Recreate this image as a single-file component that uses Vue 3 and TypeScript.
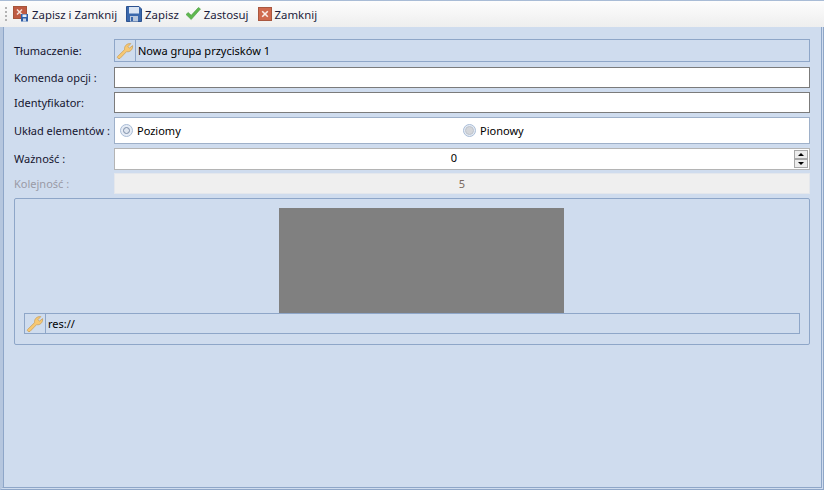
<script setup lang="ts">
const tools = [
  { label: 'Zapisz i Zamknij', icon: 'saveclose' },
  { label: 'Zapisz', icon: 'save' },
  { label: 'Zastosuj', icon: 'apply' },
  { label: 'Zamknij', icon: 'close' },
]
</script>

<template>
  <div class="window">
    <div class="toolbar">
      <div class="grip"><i v-for="n in 4" :key="n"></i></div>
      <div v-for="t in tools" :key="t.label" class="tool" :class="'tool-' + t.icon">
        <svg v-if="t.icon === 'saveclose'" width="16" height="16" viewBox="0 0 16 16">
          <rect x="0.5" y="0.5" width="13" height="12" fill="#bf5a42" stroke="#a5543a" />
          <path d="M4 3.5l5 5M9 3.5l-5 5" stroke="#f6e3dc" stroke-width="1.5" />
          <rect x="8" y="8" width="7" height="7.5" fill="#2f5fa8" />
          <rect x="9.5" y="8.5" width="4" height="2.5" fill="#e8eef8" />
          <rect x="10" y="12.5" width="3" height="3" fill="#c5d2e6" />
        </svg>
        <svg v-else-if="t.icon === 'save'" width="16" height="16" viewBox="0 0 16 16">
          <path d="M0.5 0.5h12.5l2.5 2.5v12.5h-15z" fill="#3a68ac" stroke="#2c5290" />
          <rect x="3" y="1" width="10" height="6.5" fill="#dbe5f3" />
          <rect x="4" y="10" width="8" height="5.5" fill="#b9c7dc" />
          <rect x="5" y="11" width="2" height="4" fill="#3a68ac" />
        </svg>
        <svg v-else-if="t.icon === 'apply'" width="16" height="16" viewBox="0 0 16 16">
          <path d="M1 8.5l2.2-2 3 2.8L13.4 1.5 15.5 3 6.2 13.5z" fill="#5fb84f" stroke="#4a9c3f" stroke-width="0.6" />
        </svg>
        <svg v-else width="16" height="16" viewBox="0 0 16 16">
          <rect x="1.5" y="1.5" width="13" height="13" fill="#d06a4e" stroke="#a9573f" />
          <path d="M5.2 5.2l5.6 5.6M10.8 5.2l-5.6 5.6" stroke="#fbeee9" stroke-width="1.6" />
        </svg>
        <span>{{ t.label }}</span>
      </div>
    </div>

    <div class="body">
      <div class="row row-translate">
        <label>Tłumaczenie:</label>
        <div class="lookup">
          <div class="wrench">
            <svg width="18" height="18" viewBox="0 0 18 18">
              <path d="M1.5 14.6L8.6 7.6C8 4.6 10.4 1.2 14.8 1.6L12 4.6 13.4 6.2 16.6 3.6C17 8 13.6 10.4 10.6 9.6L4 16.4C2.6 17.2 0.8 15.8 1.5 14.6Z" fill="#f7c873" stroke="#c9a15e" stroke-width="0.8" />
            </svg>
          </div>
          <span>Nowa grupa przycisków 1</span>
        </div>
      </div>

      <div class="row row-text">
        <label>Komenda opcji :</label>
        <div class="input dark"></div>
      </div>

      <div class="row row-text">
        <label>Identyfikator:</label>
        <div class="input dark"></div>
      </div>

      <div class="row row-radio">
        <label>Układ elementów :</label>
        <div class="input radios">
          <div class="radio-cell">
            <span class="radio on"><i></i></span>
            <span>Poziomy</span>
          </div>
          <div class="radio-cell">
            <span class="radio"><i></i></span>
            <span>Pionowy</span>
          </div>
        </div>
      </div>

      <div class="row row-spin">
        <label>Ważność :</label>
        <div class="input spin">
          <span class="value">0</span>
          <div class="spin-buttons">
            <div class="spin-btn"><b class="up"></b></div>
            <div class="spin-btn"><b class="down"></b></div>
          </div>
        </div>
      </div>

      <div class="row row-off">
        <label class="muted">Kolejność :</label>
        <div class="input off">
          <span class="value">5</span>
        </div>
      </div>

      <div class="group">
        <div class="picture"></div>
        <div class="lookup small">
          <div class="wrench">
            <svg width="18" height="18" viewBox="0 0 18 18">
              <path d="M1.5 14.6L8.6 7.6C8 4.6 10.4 1.2 14.8 1.6L12 4.6 13.4 6.2 16.6 3.6C17 8 13.6 10.4 10.6 9.6L4 16.4C2.6 17.2 0.8 15.8 1.5 14.6Z" fill="#f7c873" stroke="#c9a15e" stroke-width="0.8" />
            </svg>
          </div>
          <span>res://</span>
        </div>
      </div>
    </div>
  </div>
</template>

<style>
html, body { margin: 0; padding: 0; }
</style>

<style scoped>
.window {
  width: 824px;
  height: 490px;
  display: flex;
  flex-direction: column;
  box-sizing: border-box;
  font-family: "Noto Sans", "Open Sans", sans-serif;
  font-size: 11px;
  color: #15152e;
  background: #cfdcee;
  overflow: hidden;
}
.toolbar {
  height: 27px;
  flex: none;
  display: flex;
  align-items: center;
  box-sizing: border-box;
  padding-left: 5px;
  background: linear-gradient(#fdfdfd, #eeeeee);
  border-top: 1px solid #a9bcd6;
}
.grip {
  width: 3px;
  display: flex;
  flex-direction: column;
  gap: 2px;
  margin-right: 5px;
}
.grip i { display: block; width: 2px; height: 2px; background: #b3b3b3; }
.tool {
  display: flex;
  align-items: center;
  gap: 3px;
  font-size: 11.4px;
  color: #1c1c3c;
}
.tool-saveclose { margin-right: 9px; }
.tool-save { margin-right: 6px; }
.tool-apply { margin-right: 8px; }
.tool-close { gap: 2px; }
.body {
  flex: 1;
  box-sizing: border-box;
  padding: 12px 11px 0 11px;
  border-left: 3px solid #b5c6de;
  border-right: 3px double #8ea6c8;
  border-bottom: 3px double #8ea6c8;
  box-shadow: inset 1px 0 0 #8ea6c8;
  display: flex;
  flex-direction: column;
}
.row { display: flex; align-items: center; }
.row label { width: 100px; flex: none; }
.row-translate { height: 23px; margin-bottom: 5px; }
.row-text { height: 21px; margin-bottom: 4px; }
.row-radio { height: 27px; margin-bottom: 4px; }
.row-spin { height: 22px; margin-bottom: 3px; }
.row-spin label { padding-bottom: 2px; }
.row-off { height: 21px; margin-bottom: 4px; }
.muted { color: #9a9aa6; }
.lookup {
  flex: 1;
  height: 100%;
  display: flex;
  align-items: center;
  box-sizing: border-box;
  border: 1px solid #8ea6c8;
  color: #000;
}
.wrench {
  width: 20px;
  height: 100%;
  flex: none;
  display: flex;
  align-items: center;
  justify-content: center;
  border-right: 1px solid #8ea6c8;
  margin-right: 2px;
}
.input {
  flex: 1;
  height: 100%;
  box-sizing: border-box;
  background: #fff;
  border: 1px solid #9eb0c9;
}
.input.dark { border-color: #7b7b7b; }
.radios { display: flex; align-items: center; color: #000; }
.radio-cell {
  width: 343px;
  flex: none;
  display: flex;
  align-items: center;
  gap: 4px;
  padding-left: 5px;
  box-sizing: border-box;
}
.radio {
  width: 13px;
  height: 13px;
  border-radius: 50%;
  box-sizing: border-box;
  border: 1px solid #a9bcd6;
  background: #e6ecf5;
  display: flex;
  align-items: center;
  justify-content: center;
}
.radio i {
  width: 9px;
  height: 9px;
  border-radius: 50%;
  background: #d4d6da;
  box-sizing: border-box;
  border: 1px solid #bcc3cc;
  display: block;
}
.radio.on i {
  width: 7px;
  height: 7px;
  background: #dfe6f0;
  border: 1px solid #7c8ea8;
}
.spin {
  display: flex;
  align-items: center;
  border-color: #b4b4b4;
  color: #000;
}
.value { flex: 1; text-align: center; }
.spin .value { padding-bottom: 3px; padding-right: 1px; }
.spin-buttons {
  width: 14px;
  margin-right: 1px;
  display: flex;
  flex-direction: column;
}
.spin-btn {
  height: 9px;
  box-sizing: border-box;
  border: 1px solid #a8a8a8;
  background: #ececec;
  display: flex;
  align-items: center;
  justify-content: center;
}
.spin-btn b { width: 0; height: 0; display: block; border-left: 3px solid transparent; border-right: 3px solid transparent; }
.spin-btn .up { border-bottom: 3px solid #000; }
.spin-btn .down { border-top: 3px solid #000; }
.off {
  display: flex;
  align-items: center;
  background: #efefef;
  border-color: #e4e7ec;
  color: #7a6a60;
}
.off .value { padding-bottom: 1px; }
.group {
  height: 147px;
  box-sizing: border-box;
  border: 1px solid #8ea6c8;
  border-radius: 2px;
  padding: 9px 9px 0 9px;
  display: flex;
  flex-direction: column;
  align-items: center;
}
.picture {
  width: 285px;
  height: 105px;
  flex: none;
  background: #808080;
  margin-left: 18px;
}
.lookup.small {
  flex: none;
  width: 100%;
  height: 21px;
}
</style>
